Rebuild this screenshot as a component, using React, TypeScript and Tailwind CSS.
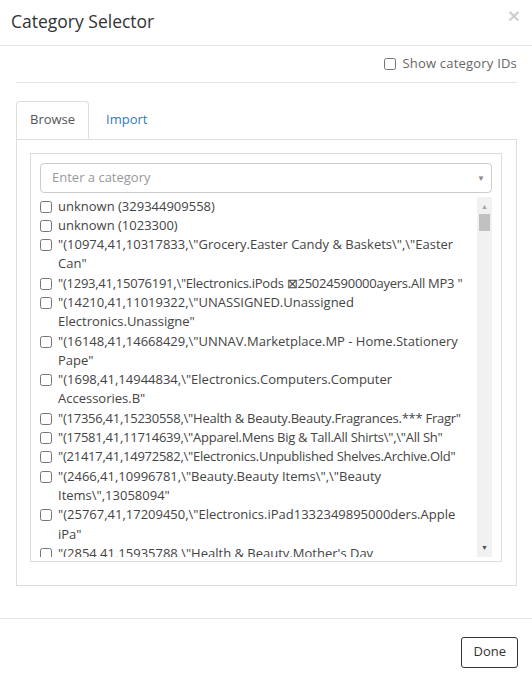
import React from "react"

const items: string[][] = [
    ["unknown (329344909558)"],
    ["unknown (1023300)"],
    ['"(10974,41,10317833,\\"Grocery.Easter Candy & Baskets\\",\\"Easter', 'Can"'],
    ['"(1293,41,15076191,\\"Electronics.iPods \u22A025024590000ayers.All MP3 "'],
    ['"(14210,41,11019322,\\"UNASSIGNED.Unassigned', 'Electronics.Unassigne"'],
    ['"(16148,41,14668429,\\"UNNAV.Marketplace.MP - Home.Stationery', 'Pape"'],
    ['"(1698,41,14944834,\\"Electronics.Computers.Computer', 'Accessories.B"'],
    ['"(17356,41,15230558,\\"Health & Beauty.Beauty.Fragrances.*** Fragr"'],
    ['"(17581,41,11714639,\\"Apparel.Mens Big & Tall.All Shirts\\",\\"All Sh"'],
    ['"(21417,41,14972582,\\"Electronics.Unpublished Shelves.Archive.Old"'],
    ['"(2466,41,10996781,\\"Beauty.Beauty Items\\",\\"Beauty', 'Items\\",13058094"'],
    ['"(25767,41,17209450,\\"Electronics.iPad1332349895000ders.Apple', 'iPa"'],
    ['"(2854,41,15935788,\\"Health & Beauty.Mother\'s Day', 'Gifts"'],
]

function CategoryRow({ lines }: { lines: string[] }) {
    return (
        <label className="flex items-start gap-[6px]">
            <input type="checkbox" className="m-0 mt-[4px] w-[12px] h-[12px] shrink-0" />
            <div className="flex flex-col">
                {lines.map((line, i) => (
                    <span key={i} className={line.length > 64 ? "whitespace-nowrap tracking-[-0.25px]" : "whitespace-nowrap"}>
                        {line}
                    </span>
                ))}
            </div>
        </label>
    )
}

export default function App() {
    return (
        <div className="w-[532px] h-[678px] bg-white text-[#333] font-['Open_Sans',sans-serif] flex flex-col">
            {/* header */}
            <div className="h-[46px] border-b border-[#e5e5e5] pl-[11px] pr-[12px] flex items-start justify-between">
                <h4 className="text-[17.5px] mt-[8px] text-[#333]">Category Selector</h4>
                <button type="button" className="font-['Liberation_Sans',sans-serif] font-bold text-[21px] leading-none mt-[5px] text-black/20">
                    ×
                </button>
            </div>

            {/* body */}
            <div className="flex flex-col pl-[16px] pr-[15px] pb-[32px]">
                <div className="flex justify-end items-center gap-[7px] pt-[8px] pb-[8px] border-b border-[#e5e5e5] text-[13px] text-[#666]">
                    <input type="checkbox" className="m-0 w-[12px] h-[12px]" />
                    <span className="tracking-[0.2px]">Show category IDs</span>
                </div>

                <div className="mt-[18px] flex border-b border-[#ddd] text-[13px]">
                    <div className="border border-[#ddd] border-b-white -mb-px rounded-t-[4px] bg-white px-[13px] h-[38px] flex items-center text-[#555]">
                        Browse
                    </div>
                    <div className="ml-[2px] px-[15px] h-[38px] flex items-center text-[#337ab7]">
                        Import
                    </div>
                </div>

                <div className="border border-t-0 border-[#ddd] pl-[13px] pr-[14px] pt-[13px] pb-[23px]">
                    <div className="border border-[#ddd] px-[9px] pt-[9px] pb-[4px]">
                        <div className="h-[30px] border border-[#ccc] rounded-[4px] flex items-center justify-between pl-[11px] pr-[6px] text-[13px] text-[#999]">
                            <span>Enter a category</span>
                            <span className="text-[8px] text-[#888]">▼</span>
                        </div>
                        <div className="mt-[4px] h-[360px] flex text-[13px] leading-[19.3px] text-[#444]">
                            <div className="flex-1 overflow-hidden flex flex-col">
                                {items.map((lines, i) => (
                                    <CategoryRow key={i} lines={lines} />
                                ))}
                            </div>
                            <div className="w-[15px] bg-[#f1f1f1] flex flex-col items-center">
                                <span className="mt-[6px] text-[7px] leading-none text-[#a3a3a3]">▲</span>
                                <div className="mt-[4px] w-[11px] h-[17px] bg-[#c1c1c1]" />
                                <div className="flex-1" />
                                <span className="mb-[6px] text-[7px] leading-none text-[#505050]">▼</span>
                            </div>
                        </div>
                    </div>
                </div>
            </div>

            {/* footer */}
            <div className="border-t border-[#e5e5e5] flex justify-end pt-[18px] pr-[14px]">
                <button type="button" className="h-[31px] px-[11px] border border-[#333] rounded-[3px] text-[13px] text-[#333]">
                    Done
                </button>
            </div>
        </div>
    )
}
